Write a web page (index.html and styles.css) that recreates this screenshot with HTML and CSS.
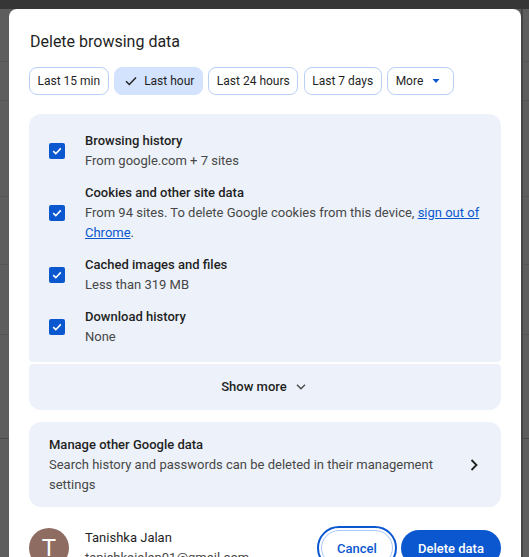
FILE: index.html
```html
<!DOCTYPE html>
<html>

<head>
    <title>Delete browsing data</title>
    <meta charset="UTF-8">
    <link rel="stylesheet" href="styles.css">
</head>

<body>
    <div class="dialog">
        <h1 class="dialog-title">Delete browsing data</h1>

        <div class="chips">
            <button class="chip">Last 15 min</button>
            <button class="chip selected">
                <svg class="chip-check" width="12" height="10" viewBox="0 0 12 10"><path d="M1 5.2 L4.3 8.5 L11 1.5" fill="none" stroke="#1f1f1f" stroke-width="1.4"/></svg>
                Last hour
            </button>
            <button class="chip">Last 24 hours</button>
            <button class="chip">Last 7 days</button>
            <button class="chip more">
                More
                <svg width="8" height="4" viewBox="0 0 8 4"><path d="M0.5 0 L7.5 0 L4 4 Z" fill="#0b57d0"/></svg>
            </button>
        </div>

        <div class="data-list">
            <div class="data-item">
                <span class="checkbox"><svg width="16" height="16" viewBox="0 0 16 16"><path d="M4.2 8.2 L6.8 10.7 L11.8 5.4" fill="none" stroke="#fff" stroke-width="1.6"/></svg></span>
                <div class="item-text">
                    <div class="item-title">Browsing history</div>
                    <div class="item-sub">From google.com + 7 sites</div>
                </div>
            </div>
            <div class="data-item">
                <span class="checkbox"><svg width="16" height="16" viewBox="0 0 16 16"><path d="M4.2 8.2 L6.8 10.7 L11.8 5.4" fill="none" stroke="#fff" stroke-width="1.6"/></svg></span>
                <div class="item-text">
                    <div class="item-title">Cookies and other site data</div>
                    <div class="item-sub">From 94 sites. To delete Google cookies from this device, <a href="#">sign out of Chrome</a>.</div>
                </div>
            </div>
            <div class="data-item">
                <span class="checkbox"><svg width="16" height="16" viewBox="0 0 16 16"><path d="M4.2 8.2 L6.8 10.7 L11.8 5.4" fill="none" stroke="#fff" stroke-width="1.6"/></svg></span>
                <div class="item-text">
                    <div class="item-title">Cached images and files</div>
                    <div class="item-sub">Less than 319 MB</div>
                </div>
            </div>
            <div class="data-item">
                <span class="checkbox"><svg width="16" height="16" viewBox="0 0 16 16"><path d="M4.2 8.2 L6.8 10.7 L11.8 5.4" fill="none" stroke="#fff" stroke-width="1.6"/></svg></span>
                <div class="item-text">
                    <div class="item-title">Download history</div>
                    <div class="item-sub">None</div>
                </div>
            </div>
        </div>

        <div class="show-more">
            Show more
            <svg width="10" height="6" viewBox="0 0 10 6"><path d="M1 0.8 L5 4.8 L9 0.8" fill="none" stroke="#474747" stroke-width="1.4"/></svg>
        </div>

        <div class="manage">
            <div class="item-text">
                <div class="item-title">Manage other Google data</div>
                <div class="item-sub">Search history and passwords can be deleted in their management settings</div>
            </div>
            <svg class="manage-arrow" width="8" height="12" viewBox="0 0 8 12"><path d="M1.5 1 L6.5 6 L1.5 11" fill="none" stroke="#1f1f1f" stroke-width="1.8"/></svg>
        </div>

        <div class="footer">
            <div class="avatar">T</div>
            <div class="account">
                <div class="account-name">Tanishka Jalan</div>
                <div class="account-email">tanishkajalan01@gmail.com</div>
            </div>
            <div class="actions">
                <button class="btn btn-cancel">Cancel</button>
                <button class="btn btn-delete">Delete data</button>
            </div>
        </div>
    </div>
</body>

</html>
```
FILE: styles.css
```css
* {
    margin: 0;
    padding: 0;
    box-sizing: border-box;
}

html,
body {
    height: 100%;
    overflow: hidden;
}

body {
    font-family: Roboto, "Liberation Sans", Arial, sans-serif;
    font-size: 13px;
    line-height: 20px;
    color: #1f1f1f;
    padding: 9px 0 0 9px;
    background:
        linear-gradient(#363636 0 9px, transparent 9px),
        linear-gradient(to right, transparent 521px, #454545 521px 523px, transparent 523px),
        linear-gradient(transparent 61px, #545454 61px 62px, transparent 62px),
        linear-gradient(transparent 100px, #555555 100px 101px, transparent 101px),
        linear-gradient(transparent 196px, #555555 196px 197px, transparent 197px),
        linear-gradient(transparent 264px, #555555 264px 265px, transparent 265px),
        linear-gradient(transparent 334px, #555555 334px 335px, transparent 335px),
        linear-gradient(transparent 438px, #4a4a4a 438px 439px, transparent 439px),
        #5e5e5e;
}

.dialog {
    width: 512px;
    min-height: 600px;
    background: #fff;
    border-radius: 8px 8px 0 0;
    padding: 21px 20px 0;
}

.dialog-title {
    font-size: 16px;
    font-weight: 400;
    line-height: 24px;
    padding-left: 1px;
    margin-bottom: 13px;
    color: #1f1f1f;
}

/* time range chips */
.chips {
    display: flex;
    gap: 5.5px;
    margin-bottom: 19px;
}

.chip {
    display: inline-flex;
    align-items: center;
    gap: 7px;
    height: 28px;
    padding: 0 7.5px;
    border: 1px solid #b9cff5;
    border-radius: 8px;
    background: #fff;
    font-family: inherit;
    font-size: 12px;
    color: #1f1f1f;
}

.chip.selected {
    background: #d3e3fd;
    border-color: #d3e3fd;
    padding-left: 10px;
}

.chip.more {
    gap: 9px;
    padding-right: 13px;
}

/* data types */
.data-list {
    display: flex;
    flex-direction: column;
    gap: 12px;
    background: #edf2fa;
    border-radius: 12px 12px 4px 4px;
    padding: 17px 20px 15px;
}

.data-item {
    display: flex;
    align-items: center;
    gap: 20px;
}

.checkbox {
    flex: none;
    width: 16px;
    height: 16px;
    border-radius: 2px;
    background: #0b57d0;
    display: flex;
}

.item-title {
    font-weight: 500;
    color: #1f1f1f;
}

.item-sub {
    color: #474747;
}

.item-sub a {
    color: #0b57d0;
}

.show-more {
    margin-top: 2px;
    height: 46px;
    display: flex;
    align-items: center;
    justify-content: center;
    gap: 9px;
    background: #edf2fa;
    border-radius: 4px 4px 12px 12px;
    font-weight: 500;
    padding-right: 3px;
}

.manage {
    margin-top: 12px;
    display: flex;
    align-items: center;
    gap: 12px;
    background: #edf2fa;
    border-radius: 12px;
    padding: 13px 23px 12px 20px;
}

.manage .item-text {
    flex: 1;
    padding-right: 12px;
}

.manage-arrow {
    flex: none;
}

/* account + buttons */
.footer {
    margin-top: 21px;
    display: flex;
    align-items: center;
    gap: 16px;
}

.avatar {
    width: 40px;
    height: 40px;
    border-radius: 50%;
    background: #8e6c61;
    color: #fff;
    font-size: 24px;
    display: flex;
    align-items: center;
    justify-content: center;
}

.account {
    flex: 1;
    color: #1f1f1f;
}

.account-email {
    color: #474747;
}

.actions {
    display: flex;
    gap: 8px;
}

.btn {
    height: 36px;
    border-radius: 18px;
    font-family: inherit;
    font-size: 13px;
    font-weight: 500;
}

.btn-cancel {
    width: 72px;
    background: #fff;
    color: #0b57d0;
    border: 1px solid #a8c7fa;
    outline: 2px solid #0b57d0;
    outline-offset: 2px;
}

.btn-delete {
    width: 100px;
    background: #0b57d0;
    color: #fff;
    border: none;
}
```
